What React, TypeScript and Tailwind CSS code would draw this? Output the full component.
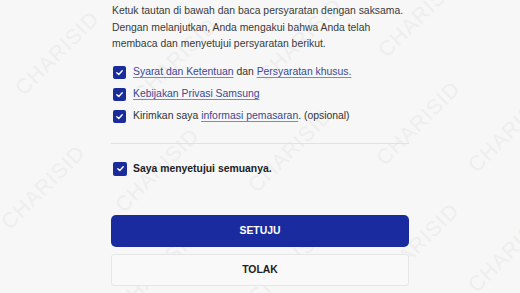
import React from "react";

const marks = [
  { x: 57, y: 53 },
  { x: 175, y: 60 },
  { x: 300, y: 40 },
  { x: 420, y: 15 },
  { x: 43, y: 187 },
  { x: 157, y: 170 },
  { x: 290, y: 150 },
  { x: 418, y: 123 },
  { x: 510, y: 130 },
  { x: 157, y: 270 },
  { x: 290, y: 262 },
  { x: 417, y: 245 },
  { x: 510, y: 250 },
];

const Box = ({ size = 13 }: { size?: number }) => (
  <span
    className="flex shrink-0 items-center justify-center rounded-[2px] bg-[#1a2b9c]"
    style={{ width: size, height: size }}
  >
    <svg width="9" height="9" viewBox="0 0 10 10" fill="none">
      <polyline
        points="2,5.2 4.2,7.2 8,3"
        stroke="#fff"
        strokeWidth="1.6"
        strokeLinecap="round"
        strokeLinejoin="round"
      />
    </svg>
  </span>
);

const Link = ({ children }: { children: React.ReactNode }) => (
  <span className="text-[#3a4896] underline underline-offset-[2px] decoration-[#8088bb]">
    {children}
  </span>
);

export default function App() {
  return (
    <div className="relative h-[293px] w-[520px] overflow-hidden bg-[#f7f7f7] font-['Liberation_Sans',Arial,sans-serif]">
      {/* watermark */}
      {marks.map((m, i) => (
        <span
          key={i}
          className="pointer-events-none absolute -translate-x-1/2 -translate-y-1/2 -rotate-45 select-none whitespace-nowrap text-[21px] font-light tracking-[1px] text-[#eeeeee]"
          style={{ left: m.x, top: m.y }}
        >
          CHARISID
        </span>
      ))}

      <div className="relative mx-auto w-[298px] pt-[3px]">
        <p className="pl-px text-[10.4px] leading-[16.6px] text-[#3a3a3a]">
          Ketuk tautan di bawah dan baca persyaratan dengan saksama. Dengan
          melanjutkan, Anda mengakui bahwa Anda telah membaca dan menyetujui
          persyaratan berikut.
        </p>

        <div className="mt-[13px] flex flex-col gap-[9px] pl-[2px] text-[10.4px] text-[#333]">
          <div className="flex h-[13px] items-center gap-[7px]">
            <Box />
            <span>
              <Link>Syarat dan Ketentuan</Link> dan{" "}
              <Link>Persyaratan khusus.</Link>
            </span>
          </div>
          <div className="flex h-[13px] items-center gap-[7px]">
            <Box />
            <Link>Kebijakan Privasi Samsung</Link>
          </div>
          <div className="flex h-[13px] items-center gap-[7px]">
            <Box />
            <span>
              Kirimkan saya <Link>informasi pemasaran</Link>. (opsional)
            </span>
          </div>
        </div>

        <div className="mt-[20px] h-px bg-[#e2e2e2]" />

        <div className="mt-[18px] flex h-[14px] items-center gap-[6px] pl-[2px]">
          <Box size={14} />
          <span className="text-[10.4px] font-bold text-[#222]">
            Saya menyetujui semuanya.
          </span>
        </div>

        <button className="mt-[39px] flex h-[32px] w-full items-center justify-center rounded-[5px] bg-[#1a2ba0] text-[10.4px] font-bold text-white">
          SETUJU
        </button>
        <button className="mt-[7px] flex h-[32px] w-full items-center justify-center rounded-[3px] border border-[#e6e6e6] bg-[#f9f9f9] text-[10.4px] font-bold text-[#222]">
          TOLAK
        </button>
      </div>
    </div>
  );
}
